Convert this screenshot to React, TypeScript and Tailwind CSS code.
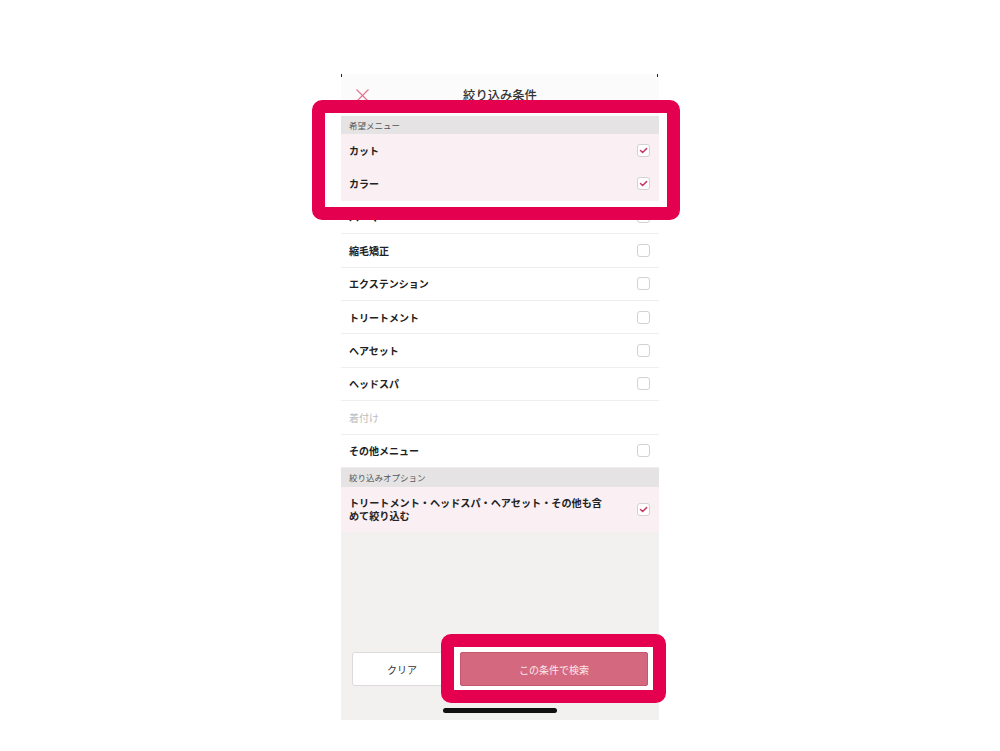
import React from "react";

const FONT = { fontFamily: '"Noto Sans CJK JP", "Noto Sans", sans-serif' };

function Checkbox({ checked }: { checked?: boolean }) {
  return (
    <span className="w-[13px] h-[13px] rounded-[3px] border border-[#d3d1d1] bg-white flex items-center justify-center shrink-0">
      {checked && (
        <svg width="11" height="11" viewBox="0 0 11 11">
          <polyline points="2.5,5.5 4.6,7.5 8.6,3.6" fill="none" stroke="#c63b63" strokeWidth="1.5" strokeLinecap="round" strokeLinejoin="round" />
        </svg>
      )}
    </span>
  );
}

function Row({ label, checked, disabled }: { label: string; checked?: boolean; disabled?: boolean }) {
  return (
    <div
      className={`h-[33.4px] flex items-center justify-between pl-[8px] pr-[9px] border-b ${
        checked ? "bg-[#faeff3] border-[#faeff3]" : "bg-white border-[#efeded]"
      }`}
    >
      <span className={`text-[10px] ${disabled ? "text-[#bdbbbb] font-normal" : "text-[#222] font-bold"}`}>{label}</span>
      {!disabled && <Checkbox checked={checked} />}
    </div>
  );
}

function SectionHeader({ label, h }: { label: string; h: string }) {
  return (
    <div className={`${h} bg-[#e5e3e3] flex items-center pl-[8px]`}>
      <span className="text-[8.5px] text-[#555]">{label}</span>
    </div>
  );
}

export default function App() {
  return (
    <div className="w-[1000px] h-[751px] bg-white flex justify-center pt-[74px]" style={FONT}>
      <div className="w-[318px] h-[646px] flex flex-col relative bg-[#f3f1f0]">
        <span className="absolute left-0 top-0 w-[1px] h-[3px] bg-[#222]" />
        <span className="absolute right-[1px] top-0 w-[1px] h-[3px] bg-[#222]" />
        {/* header */}
        <div className="h-[42px] bg-[#fcfbfb] grid grid-cols-[42px_1fr_42px] items-center">
          <div className="flex items-center justify-center">
            <svg width="13" height="13" viewBox="0 0 13 13">
              <line x1="0.5" y1="0.5" x2="12.5" y2="12.5" stroke="#e0718d" strokeWidth="1.1" />
              <line x1="12.5" y1="0.5" x2="0.5" y2="12.5" stroke="#e0718d" strokeWidth="1.1" />
            </svg>
          </div>
          <div className="text-center text-[12.3px] font-medium text-[#333]">絞り込み条件</div>
          <div />
        </div>
        {/* highlighted section */}
        <div className="relative">
          <SectionHeader label="希望メニュー" h="h-[18px]" />
          <Row label="カット" checked />
          <Row label="カラー" checked />
          <div className="absolute -top-[16px] -bottom-[19px] -left-[29px] -right-[21px] border-[13px] border-[#e4004f] rounded-[10px] z-10 pointer-events-none" />
        </div>
        <Row label="パーマ" />
        <Row label="縮毛矯正" />
        <Row label="エクステンション" />
        <Row label="トリートメント" />
        <Row label="ヘアセット" />
        <Row label="ヘッドスパ" />
        <Row label="着付け" disabled />
        <Row label="その他メニュー" />
        <SectionHeader label="絞り込みオプション" h="h-[19px]" />
        <div className="h-[45px] bg-[#faeff3] flex items-center justify-between pl-[8px] pr-[9px]">
          <span className="w-[256px] text-[10.15px] leading-[13px] font-bold text-[#222]">
            トリートメント・ヘッドスパ・ヘアセット・その他も含めて絞り込む
          </span>
          <span className="mt-[1px]">
            <Checkbox checked />
          </span>
        </div>
        <div className="flex-1" />
        {/* footer */}
        <div className="px-[11px] flex gap-[8px]">
          <button className="w-[100px] h-[34px] bg-white border border-[#dcdada] rounded-[3px] text-[10px] text-[#333]">
            クリア
          </button>
          <div className="relative flex-1 flex">
            <div className="absolute -top-[18px] -bottom-[17px] -left-[19px] -right-[18px] border-[13px] border-[#e4004f] bg-white rounded-[10px] z-0" />
            <button className="relative z-10 flex-1 h-[34px] bg-[#d4687f] border border-[#c45670] rounded-[2px] text-[10px] text-[#fbe9ee]">
              この条件で検索
            </button>
          </div>
        </div>
        <div className="mt-[22px] mb-[7px] flex justify-center">
          <span className="w-[114px] h-[5px] rounded-full bg-[#111]" />
        </div>
      </div>
    </div>
  );
}
